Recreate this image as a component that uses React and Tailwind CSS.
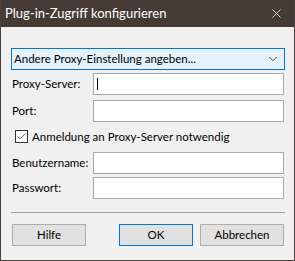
import { ChevronDown, X, Check } from 'lucide-react';

const font = { fontFamily: 'Lato, "Noto Sans", sans-serif' };

function Field({ label, className = '', caret = false }) {
  return (
    <div className={`flex items-center ${className}`}>
      <span className="w-[82px] pl-px text-[11.5px] text-black">{label}</span>
      <div className="relative h-[22px] w-[192px] border border-[#a9a9a9] bg-white">
        {caret && <div className="absolute left-[3px] top-[4px] h-[12px] w-px bg-black" />}
      </div>
    </div>
  );
}

function Button({ children, primary = false, className = '' }) {
  return (
    <button
      className={`h-[22px] border bg-[#e1e1e1] text-[11.5px] text-black ${primary ? 'border-[#0078d7]' : 'border-[#adadad]'} ${className}`}
    >
      {children}
    </button>
  );
}

export default function App() {
  return (
    <div className="flex h-[261px] w-[295px] flex-col overflow-hidden border border-t-0 border-[#4b403b] bg-[#f0f0f0] leading-none" style={font}>
      {/* Title bar */}
      <div className="flex h-[27px] shrink-0 items-center justify-between bg-[#463a35] pl-[4px] pr-[10px] text-white">
        <span className="text-[13px]">Plug-in-Zugriff konfigurieren</span>
        <X size={15} strokeWidth={1.2} />
      </div>

      <div className="flex flex-col px-[10px] pt-[21px]">
        {/* Combo */}
        <div className="flex h-[22px] w-[274px] items-center justify-between border border-[#0078d7] bg-[#e5f1fb] pl-[2px] pr-[4px]">
          <span className="text-[11.5px] text-black">Andere Proxy-Einstellung angeben...</span>
          <ChevronDown size={14} strokeWidth={1.5} className="text-[#333]" />
        </div>

        <Field label="Proxy-Server:" className="mt-[3px]" caret />
        <Field label="Port:" className="mt-[5px]" />

        {/* Checkbox */}
        <div className="ml-[4px] mt-[8px] flex items-center gap-[4px]">
          <div className="flex h-[13px] w-[13px] items-center justify-center border border-[#333] bg-white">
            <Check size={11} strokeWidth={1.6} className="text-[#222]" />
          </div>
          <span className="text-[11.5px] text-black">Anmeldung an Proxy-Server notwendig</span>
        </div>

        <Field label="Benutzername:" className="mt-[9px]" />
        <Field label="Passwort:" className="mt-[3px]" />

        {/* Separator */}
        <div className="mt-[13px] h-px w-[274px] bg-[#a0a0a0]" />

        {/* Buttons */}
        <div className="mt-[11px] flex items-center">
          <Button className="ml-px w-[74px]">Hilfe</Button>
          <Button primary className="ml-[33px] w-[74px]">OK</Button>
          <Button className="ml-[7px] w-[84px]">Abbrechen</Button>
        </div>
      </div>
    </div>
  );
}
